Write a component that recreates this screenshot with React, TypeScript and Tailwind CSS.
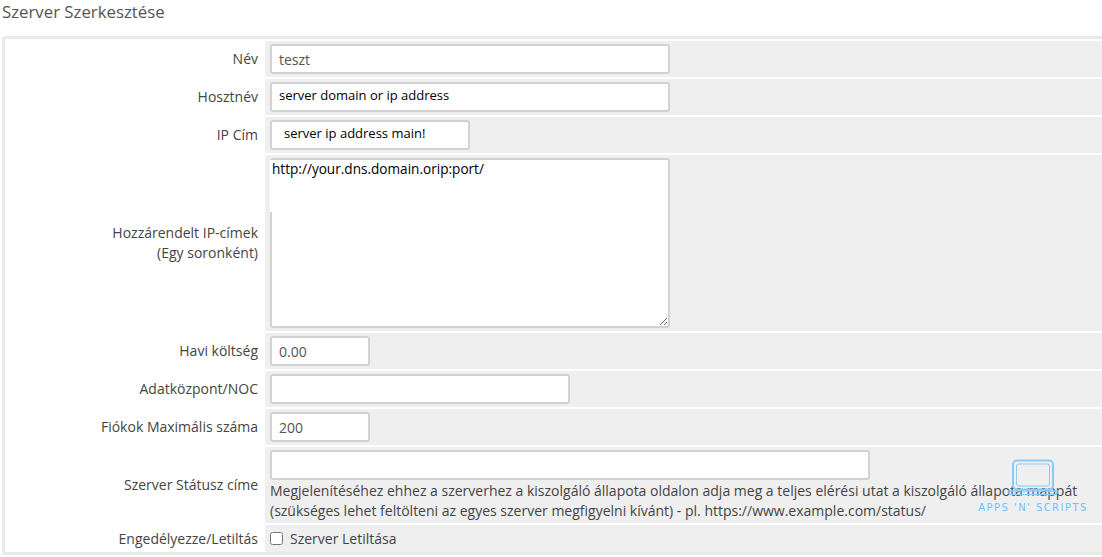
import * as React from "react";

const inputBase = "h-[30px] rounded-[3px] border-2 border-[#d2d2d2] bg-white outline-none";

function Row({
  label,
  cellClass = "h-[36px] items-center",
  children,
}: {
  label: React.ReactNode;
  cellClass?: string;
  children: React.ReactNode;
}) {
  return (
    <div className="flex items-stretch gap-[2px]">
      <div className="flex w-[258px] shrink-0 items-center justify-end pr-[5px] text-right text-[14px] leading-[20px] text-[#444]">
        {label}
      </div>
      <div className={`flex flex-1 bg-[#efefef] pl-[5px] ${cellClass}`}>{children}</div>
    </div>
  );
}

function Watermark() {
  return (
    <div className="pointer-events-none absolute left-[976px] top-[459px] flex w-[114px] flex-col items-center">
      <svg width="50" height="38" viewBox="0 0 50 38" fill="none" stroke="#86ccff">
        <rect x="5" y="1.5" width="40" height="29" rx="4" strokeWidth="2" />
        <rect x="8.5" y="5" width="33" height="22" rx="2" strokeWidth="1" />
        <path d="M1 32h48v1.5a2 2 0 0 1-2 2H3a2 2 0 0 1-2-2z" strokeWidth="1.5" />
      </svg>
      <span className="mt-[5px] whitespace-nowrap font-['DejaVu_Sans',sans-serif] text-[10px] leading-[12px] tracking-[1.45px] text-[#6fc2fb]">
        APPS 'N' SCRIPTS
      </span>
    </div>
  );
}

export default function App() {
  return (
    <div className="relative h-[557px] w-[1102px] overflow-hidden bg-white font-['Open_Sans',sans-serif]">
      <h1 className="h-[36px] pl-[2px] text-[16.8px] leading-[24px] text-[#555]">
        Szerver Szerkesztése
      </h1>
      <div className="ml-[2px] w-[1110px] rounded-[3px] border-[3px] border-[#e5eaea] bg-white pt-[2px]">
        <div className="flex flex-col gap-[2px]">
          <Row label="Név">
            <input
              readOnly
              value="teszt"
              className={`${inputBase} w-[400px] px-[7px] text-[14px] text-[#555]`}
            />
          </Row>
          <Row label="Hosztnév">
            <input
              readOnly
              value="server domain or ip address"
              className={`${inputBase} w-[400px] px-[7px] pb-[5px] text-[13px] text-black`}
            />
          </Row>
          <Row label="IP Cím">
            <input
              readOnly
              value="server ip address main!"
              className={`${inputBase} w-[200px] pb-[5px] pl-[12px] text-[13px] text-black`}
            />
          </Row>
          <Row
            label={
              <span>
                Hozzárendelt IP-címek
                <br />
                (Egy soronként)
              </span>
            }
            cellClass="h-[176px] items-center"
          >
            <div className="relative flex h-[170px] w-[400px]">
              <textarea
                readOnly
                value="http://your.dns.domain.orip:port/"
                className="h-[170px] w-[400px] rounded-[3px] border-2 border-[#d2d2d2] bg-white text-[13.6px] leading-[18px] text-black outline-none"
              />
              <div className="absolute left-0 top-[2px] h-[52px] w-[2px] bg-white" />
            </div>
          </Row>
          <Row label="Havi költség">
            <input readOnly value="0.00" className={`${inputBase} w-[100px] px-[7px] text-[14px] text-[#555]`} />
          </Row>
          <Row label="Adatközpont/NOC">
            <input readOnly value="" className={`${inputBase} w-[300px] px-[7px] text-[14px]`} />
          </Row>
          <Row label="Fiókok Maximális száma">
            <input readOnly value="200" className={`${inputBase} w-[100px] px-[7px] text-[14px] text-[#555]`} />
          </Row>
          <Row label="Szerver Státusz címe" cellClass="h-[76px] flex-col items-start pt-[3px]">
            <input readOnly value="" className={`${inputBase} w-[600px] shrink-0 px-[7px] text-[14px]`} />
            <p className="mt-[1px] text-[14px] leading-[20px] whitespace-nowrap text-[#444]">
              Megjelenítéséhez ehhez a szerverhez a kiszolgáló állapota oldalon adja meg a teljes elérési utat a kiszolgáló állapota mappát
              <br />
              (szükséges lehet feltölteni az egyes szerver megfigyelni kívánt) - pl. https://www.example.com/status/
            </p>
          </Row>
          <Row label="Engedélyezze/Letiltás" cellClass="h-[27px] items-center">
            <input type="checkbox" readOnly className="h-[13px] w-[13px]" />
            <span className="ml-[7px] text-[14px] text-[#444]">Szerver Letiltása</span>
          </Row>
        </div>
      </div>
      <Watermark />
    </div>
  );
}
